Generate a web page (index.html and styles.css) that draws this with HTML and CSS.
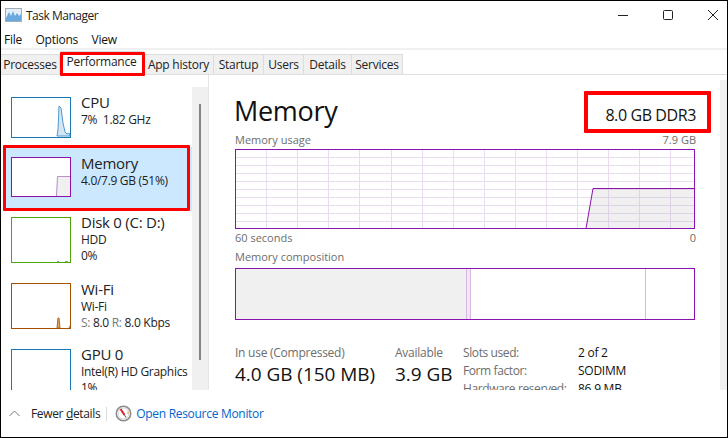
FILE: index.html
```html
<!DOCTYPE html>
<html lang="en">
<head>
<meta charset="utf-8">
<title>Task Manager</title>
<link rel="stylesheet" href="styles.css">
</head>
<body>
<div class="window">
  <header class="titlebar">
    <svg class="app-icon" width="17" height="14" viewBox="0 0 17 14"><rect x="0.5" y="0.5" width="16" height="13" fill="#e3eef9" stroke="#a3adb8"/><path d="M1 10 L4 4 L6 8 L8 3 L10 8 L12 5 L14 8 L16 6 V13 H1Z" fill="#6aa9e0"/></svg>
    <span class="title">Task Manager</span>
    <div class="controls">
      <svg width="12" height="12" viewBox="0 0 12 12"><path d="M1 6.5H11" stroke="#222" fill="none"/></svg>
      <svg width="12" height="12" viewBox="0 0 12 12"><rect x="1.5" y="1.5" width="9" height="9" rx="1" stroke="#222" fill="none"/></svg>
      <svg width="12" height="12" viewBox="0 0 12 12"><path d="M1 1L11 11M11 1L1 11" stroke="#222" fill="none"/></svg>
    </div>
  </header>
  <nav class="menu"><span>File</span><span>Options</span><span>View</span></nav>
  <div class="tabs">
    <span class="tab t1">Processes</span>
    <span class="tab t2 active">Performance</span>
    <span class="tab t3">App history</span>
    <span class="tab t4">Startup</span>
    <span class="tab t5">Users</span>
    <span class="tab t6">Details</span>
    <span class="tab t7">Services</span>
  </div>
  <main class="content">
    <aside class="sidebar">
      <div class="list">
        <div class="item item-cpu">
          <svg class="thumb" width="60" height="41" viewBox="0 0 60 41"><path d="M46 39 L47 33 L48 9 L50 11 L52 26 L54 35 L56 37 L58 36 L59 39Z" fill="#d5e6f3" stroke="#4d9ad0"/><rect x="0.5" y="0.5" width="59" height="40" fill="none" stroke="#1a78b4"/></svg>
          <div class="info"><div class="name">CPU</div><div class="sub">7%&nbsp; 1.82 GHz</div></div>
        </div>
        <div class="item item-mem selected">
          <svg class="thumb" width="60" height="40" viewBox="0 0 60 40"><rect x="0.5" y="0.5" width="59" height="39" fill="#fff"/><path d="M45 39.5 L46 19.5 H59.5 V39.5Z" fill="#f0f0f0"/><path d="M45.5 39 L46.5 19.5 H59" fill="none" stroke="#b98fd0"/><rect x="0.5" y="0.5" width="59" height="39" fill="none" stroke="#8b12ae"/></svg>
          <div class="info"><div class="name">Memory</div><div class="sub">4.0/7.9 GB (51%)</div></div>
        </div>
        <div class="item item-disk">
          <svg class="thumb" width="60" height="46" viewBox="0 0 60 46"><path d="M46 45H48M54 45H57" stroke="#79b84a" stroke-width="2"/><rect x="0.5" y="0.5" width="59" height="45" fill="none" stroke="#4da60c"/></svg>
          <div class="info"><div class="name">Disk 0 (C: D:)</div><div class="sub">HDD</div><div class="sub">0%</div></div>
        </div>
        <div class="item item-wifi">
          <svg class="thumb" width="60" height="46" viewBox="0 0 60 46"><path d="M46 45 L47 35 L48 35 L49 45Z M58 45 L59 43" fill="#d9a66b" stroke="#b06a1a"/><rect x="0.5" y="0.5" width="59" height="45" fill="none" stroke="#a74f01"/></svg>
          <div class="info"><div class="name">Wi-Fi</div><div class="sub">Wi-Fi</div><div class="sub"><span class="muted">S:</span> 8.0 <span class="muted">R:</span> 8.0 Kbps</div></div>
        </div>
        <div class="item item-gpu">
          <svg class="thumb" width="60" height="46" viewBox="0 0 60 46"><rect x="0.5" y="0.5" width="59" height="45" fill="none" stroke="#1a78b4"/></svg>
          <div class="info"><div class="name">GPU 0</div><div class="sub">Intel(R) HD Graphics</div><div class="sub">1%</div></div>
        </div>
      </div>
      <div class="side-scroll"><div class="side-thumb"></div></div>
    </aside>
    <section class="panel">
      <div class="panel-body">
        <div class="head"><h1>Memory</h1><span class="spec">8.0 GB DDR3</span></div>
        <div class="cap"><span>Memory usage</span><span>7.9 GB</span></div>
        <svg class="usage" width="460" height="80" viewBox="0 0 460 80">
          <path d="M0.5 8.5H460M0.5 16.5H460M0.5 24.5H460M0.5 32.5H460M0.5 40.5H460M0.5 48.5H460M0.5 56.5H460M0.5 64.5H460M0.5 72.5H460" stroke="#ecdcf2" fill="none"/>
          <path d="M31.5 0V80M62.5 0V80M93.5 0V80M124.5 0V80M156.5 0V80M187.5 0V80M218.5 0V80M249.5 0V80M280.5 0V80M311.5 0V80M342.5 0V80M373.5 0V80M404.5 0V80M435.5 0V80" stroke="#ecdcf2" fill="none"/>
          <path d="M351 79.5 L358 39.5 H459.5 V79.5Z" fill="#9a9a9a" fill-opacity="0.15"/>
          <path d="M351 79.5 L358 39.5 H459.5" stroke="#8b12ae" fill="none"/>
          <rect x="0.5" y="0.5" width="459" height="79" fill="none" stroke="#8b12ae"/>
        </svg>
        <div class="cap under"><span>60 seconds</span><span>0</span></div>
        <div class="cap comp-cap"><span>Memory composition</span></div>
        <div class="comp">
          <div class="seg-used"></div>
          <div class="seg-mod"></div>
          <div class="seg-standby"></div>
          <div class="seg-free"></div>
        </div>
        <div class="stats">
          <div class="stat s-use"><div class="stat-label">In use (Compressed)</div><div class="stat-value">4.0 GB (150 MB)</div></div>
          <div class="stat s-avail"><div class="stat-label">Available</div><div class="stat-value">3.9 GB</div></div>
          <dl class="facts">
            <dt>Slots used:</dt><dd>2 of 2</dd>
            <dt>Form factor:</dt><dd>SODIMM</dd>
            <dt>Hardware reserved:</dt><dd>86.9 MB</dd>
          </dl>
        </div>
      </div>
      <div class="panel-scroll"></div>
    </section>
  </main>
  <footer class="footer">
    <svg class="chev" width="11" height="7" viewBox="0 0 11 7"><path d="M0.5 6 L5.5 1 L10.5 6" stroke="#777" fill="none"/></svg>
    <span class="fewer">Fewer <u>d</u>etails</span>
    <span class="sep"></span>
    <svg class="monitor" width="17" height="17" viewBox="0 0 17 17"><circle cx="8.5" cy="8.5" r="7.25" fill="#fff" stroke="#8a8a8a" stroke-width="1.5"/><circle cx="8.5" cy="8.5" r="5.5" fill="#fff" stroke="#d0d0d0"/><path d="M5.5 4 L9.5 10" stroke="#e02020" stroke-width="2"/><path d="M9.5 10 L11 12.5" stroke="#555"/><path d="M13 6.5V9" stroke="#e0a040"/></svg>
    <a class="link">Open Resource Monitor</a>
  </footer>
  <div class="mark mark-tab"></div>
  <div class="mark mark-mem"></div>
  <div class="mark mark-spec"></div>
</div>
</body>
</html>
```
FILE: styles.css
```css
* { box-sizing: border-box; }
html, body { margin: 0; padding: 0; }
body { width: 728px; height: 438px; overflow: hidden; background: #fff; font-family: "Open Sans", "Noto Sans", sans-serif; color: #111; }
.window { position: relative; width: 728px; height: 438px; border: 1px solid #000; display: flex; flex-direction: column; background: #fff; overflow: hidden; }

.titlebar { height: 28px; display: flex; align-items: center; padding-left: 4px; flex: none; }
.app-icon { margin-right: 4px; }
.title { font-size: 12px; letter-spacing: -0.5px; color: #222; }
.controls { margin-left: auto; display: flex; gap: 33px; padding-right: 8px; margin-top: -1px; }

.menu { height: 20px; display: flex; gap: 13.5px; padding-left: 3px; align-items: center; font-size: 12px; letter-spacing: -0.25px; flex: none; }

.tabs { height: 27px; margin-top: -1px; display: flex; align-items: flex-end; border-top: 2px solid #f0f0f0; border-bottom: 1px solid #dfdfdf; flex: none; position: relative; background: #fff; }
.tab { height: 20px; font-size: 12px; letter-spacing: -0.25px; line-height: 19px; background: #f0f0f0; border: 1px solid #dcdcdc; border-bottom: none; border-left: none; text-align: center; color: #222; }
.t1 { width: 59px; }
.t2 { width: 84px; height: 23px; background: #fff; line-height: 20px; }
.t3 { width: 70px; }
.t4 { width: 50px; }
.t5 { width: 40px; }
.t6 { width: 48px; }
.t7 { width: 51px; }

.content { height: 315px; display: flex; flex: none; padding-left: 2px; }
.sidebar { width: 206px; flex: none; display: flex; height: 315px; border-right: 1px solid #e6e6e6; }
.list { width: 189px; flex: none; padding-top: 22px; overflow: hidden; height: 315px; }
.item { display: flex; padding-left: 8px; }
.item-cpu { height: 60px; }
.item-mem { height: 60px; }
.item-disk { height: 66px; }
.item-wifi { height: 66px; }
.item-gpu { height: 66px; }
.selected { background: #cce8ff; margin-top: -10px; margin-bottom: 6px; padding-top: 10px; height: 64px; }
.thumb { flex: none; margin-right: 10px; display: block; }
.info { margin-top: -5px; }
.item-mem .info, .item-wifi .info { margin-top: -4px; }
.name { font-size: 15px; line-height: 20px; letter-spacing: -0.25px; color: #222; }
.sub { font-size: 12px; line-height: 16px; letter-spacing: -0.3px; color: #222; white-space: nowrap; }
.muted { color: #777; }
.side-scroll { width: 16px; flex: none; margin-top: 12px; background: #f0f0f0; display: flex; justify-content: center; padding-top: 17px; }
.side-thumb { width: 2px; height: 256px; background: #858585; }

.panel { flex: 1; display: flex; min-width: 0; }
.panel-body { flex: 1; padding: 0 24px 0 26px; overflow: hidden; height: 315px; min-width: 0; }
.panel-scroll { width: 7px; flex: none; margin-top: 5px; background: #f0f0f0; }
.head { display: flex; justify-content: space-between; align-items: flex-end; height: 58px; padding-top: 14px; }
h1 { margin: 0 0 4px -1px; font-size: 27px; font-weight: 400; line-height: 36px; letter-spacing: -0.3px; color: #111; }
.spec { font-size: 16px; line-height: 20px; letter-spacing: -0.4px; margin-bottom: 8px; color: #111; }
.cap { display: flex; justify-content: space-between; font-size: 11px; line-height: 14px; color: #6d6d6d; height: 14px; }
.usage { display: block; margin-top: 2px; }
.under { margin-top: 2px; }
.comp-cap { margin-top: 5px; }
.comp { height: 52px; margin-top: 4px; width: 460px; border: 1px solid #8b12ae; display: flex; }
.seg-used { width: 230px; background: #f0f0f0; }
.seg-mod { width: 5px; background: #f0e6f4; border-left: 1px solid #d7b9e2; border-right: 1px solid #d7b9e2; }
.seg-standby { width: 175px; border-right: 1px solid #d7b9e2; }
.seg-free { flex: 1; }
.stats { display: flex; margin-top: 24px; }
.stat-label { font-size: 12px; line-height: 18px; letter-spacing: -0.25px; color: #6d6d6d; }
.stat-value { font-size: 19px; line-height: 24px; letter-spacing: -0.05px; color: #111; white-space: nowrap; }
.s-use { width: 160px; }
.s-avail { width: 68px; }
.facts { margin: 0; display: grid; grid-template-columns: 115px auto; font-size: 12px; line-height: 18px; letter-spacing: -0.25px; }
.facts dt { color: #6d6d6d; white-space: nowrap; letter-spacing: -0.4px; }
.facts dd { margin: 0; color: #111; }

.footer { flex: 1; display: flex; align-items: center; padding-left: 8px; font-size: 12px; letter-spacing: -0.35px; }
.chev { margin-right: 11px; }
.fewer { color: #222; }
.sep { width: 1px; height: 14px; background: #dcdcdc; margin: 0 8px 0 6px; }
.monitor { margin-right: 4px; }
.link { color: #0066cc; letter-spacing: -0.3px; }

.mark { position: absolute; border: 3px solid #f00; border-radius: 1px; pointer-events: none; }
.mark-tab { left: 59px; top: 51px; width: 85px; height: 24px; }
.mark-mem { left: 2px; top: 144px; width: 187px; height: 66px; }
.mark-spec { left: 583px; top: 90px; width: 127px; height: 42px; border-width: 4px; }
```
